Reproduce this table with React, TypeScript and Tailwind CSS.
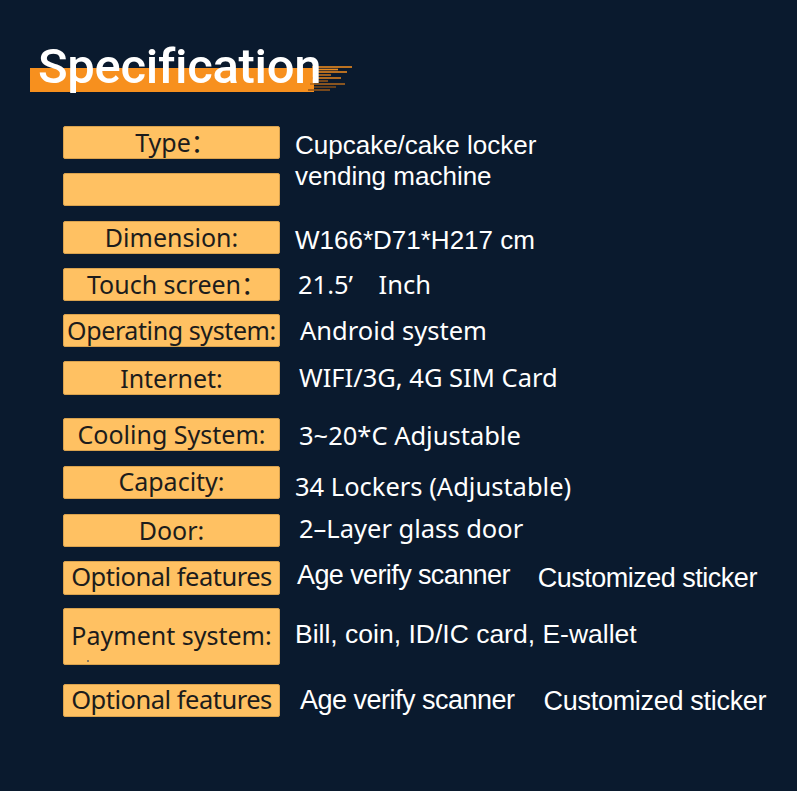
import React from "react";

type Row = {
  label: string;
  value?: string;
  extra?: string;
  top: string;
  box: string;
  labelCls: string;
  valueCls: string;
  extraCls?: string;
};

const YAHEI = "font-['Noto_Sans','Noto_Sans_CJK_SC',sans-serif]";
const NARROW = "font-['Liberation_Sans_Narrow','Liberation_Sans',sans-serif]";

const ROWS: Row[] = [
  {
    label: "Dimension:",
    value: "W166*D71*H217 cm",
    top: "mt-[15px]",
    box: "h-[33px]",
    labelCls: "text-[25px]",
    valueCls: "ml-[15px] pt-[4px] text-[26px] font-['Liberation_Sans',Arial,sans-serif]",
  },
  {
    label: "Touch screen：",
    value: "21.5’　Inch",
    top: "mt-[14px]",
    box: "h-[33px]",
    labelCls: "text-[25px] pl-[10px]",
    valueCls: `ml-[18px] text-[25.5px] ${YAHEI}`,
  },
  {
    label: "Operating system:",
    value: "Android system",
    top: "mt-[13px]",
    box: "h-[33px]",
    labelCls: "text-[25px] tracking-[-0.4px]",
    valueCls: `ml-[20px] text-[25.5px] ${YAHEI}`,
  },
  {
    label: "Internet:",
    value: "WIFI/3G, 4G SIM Card",
    top: "mt-[14px]",
    box: "h-[34px]",
    labelCls: "text-[25px]",
    valueCls: `ml-[19px] text-[25.5px] ${YAHEI}`,
  },
  {
    label: "Cooling System:",
    value: "3~20*C Adjustable",
    top: "mt-[23px]",
    box: "h-[33px]",
    labelCls: "text-[25px]",
    valueCls: `ml-[19px] pt-[2px] text-[25.5px] ${YAHEI}`,
  },
  {
    label: "Capacity:",
    value: "34 Lockers (Adjustable)",
    top: "mt-[15px]",
    box: "h-[33px]",
    labelCls: "text-[25px] pb-[2px]",
    valueCls: `ml-[15px] pt-[8px] text-[25.5px] ${YAHEI}`,
  },
  {
    label: "Door:",
    value: "2–Layer glass door",
    top: "mt-[14px]",
    box: "h-[33px]",
    labelCls: "text-[25px]",
    valueCls: `ml-[19px] pb-[2px] text-[25.5px] ${YAHEI}`,
  },
  {
    label: "Optional features",
    value: "Age verify scanner",
    extra: "Customized sticker",
    top: "mt-[14px]",
    box: "h-[34px]",
    labelCls: `text-[25.5px] ${NARROW} tracking-[-0.5px] pb-[2px]`,
    valueCls: `ml-[17px] pb-[4px] text-[27px] ${NARROW} tracking-[-0.6px]`,
    extraCls: `ml-[28px] pt-[2px] text-[27px] ${NARROW} tracking-[-0.5px]`,
  },
  {
    label: "Payment system:",
    value: "Bill, coin, ID/IC card, E-wallet",
    top: "mt-[13px]",
    box: "h-[57px]",
    labelCls: "text-[25px] font-['Liberation_Sans',Arial,sans-serif] pb-[2px]",
    valueCls: `ml-[15px] pb-[4px] text-[26.5px] ${NARROW}`,
  },
  {
    label: "Optional features",
    value: "Age verify scanner",
    extra: "Customized sticker",
    top: "mt-[19px]",
    box: "h-[33px]",
    labelCls: `text-[25.5px] ${NARROW} tracking-[-0.5px]`,
    valueCls: `ml-[20px] text-[27px] ${NARROW} tracking-[-0.5px]`,
    extraCls: `ml-[29px] pt-[3px] text-[27px] ${NARROW} tracking-[-0.3px]`,
  },
];

function Box({ className = "", children }: { className?: string; children?: React.ReactNode }) {
  return (
    <div
      className={`relative flex w-[217px] shrink-0 items-center justify-center whitespace-nowrap rounded-[2px] border border-[#d9a24e] bg-[#ffc162] leading-none text-[#1c1c1c] ${YAHEI} ${className}`}
    >
      {children}
    </div>
  );
}

function Brush() {
  // ragged brush-stroke tail at the end of the title bar
  const strokes = [
    { y: 67, x1: 312, x2: 352, c: "#f7901e" },
    { y: 69.5, x1: 316, x2: 338, c: "#e98a1f" },
    { y: 72, x1: 314, x2: 347, c: "#f28c1e" },
    { y: 75, x1: 318, x2: 331, c: "#c2711c" },
    { y: 78, x1: 312, x2: 341, c: "#d98020" },
    { y: 81, x1: 316, x2: 328, c: "#8f5419" },
    { y: 84, x1: 310, x2: 345, c: "#b56a1d" },
    { y: 87, x1: 314, x2: 336, c: "#7a4918" },
    { y: 90, x1: 308, x2: 330, c: "#93561a" },
  ];
  return (
    <svg className="absolute left-0 top-0" width="360" height="100" viewBox="0 0 360 100">
      {strokes.map((s) => (
        <line key={s.y} x1={s.x1} y1={s.y} x2={s.x2} y2={s.y} stroke={s.c} strokeWidth="1.6" />
      ))}
    </svg>
  );
}

export default function App() {
  return (
    <div className="h-[791px] w-[797px] overflow-hidden bg-[#0a1a2e]">
      {/* Title */}
      <div className="relative h-[108px]">
        <div className="absolute left-[30px] top-[68px] h-[24px] w-[284px] bg-[#f7901e]" />
        <Brush />
        <h1 className="relative pl-[38px] pt-[42px] text-[49px] font-medium leading-none tracking-[-0.3px] text-white font-['Roboto',sans-serif]">
          Specification
        </h1>
      </div>

      <div className="pl-[63px] pt-[18px] text-white">
        {/* Type spans two boxes */}
        <div className="flex">
          <div className="flex flex-col gap-[14px]">
            <Box className="h-[33px] text-[25px]">
              <span className="pl-[8px]">Type：</span>
            </Box>
            <Box className="h-[33px]" />
          </div>
          <div className="ml-[15px] pt-[4px] text-[26px] leading-[31px] font-['Liberation_Sans',Arial,sans-serif]">
            Cupcake/cake locker
            <br />
            vending machine
          </div>
        </div>

        {ROWS.map((r, i) => (
          <div key={i} className={`flex items-center ${r.top}`}>
            <Box className={`${r.box} ${r.labelCls}`}>
              {r.label}
              {r.label === "Payment system:" && (
                <span className="absolute bottom-[2px] left-[23px] h-[2px] w-[2px] bg-[#8a7a60]" />
              )}
            </Box>
            <span className={`whitespace-nowrap leading-none ${r.valueCls}`}>{r.value}</span>
            {r.extra && <span className={`whitespace-nowrap leading-none ${r.extraCls}`}>{r.extra}</span>}
          </div>
        ))}
      </div>
    </div>
  );
}
